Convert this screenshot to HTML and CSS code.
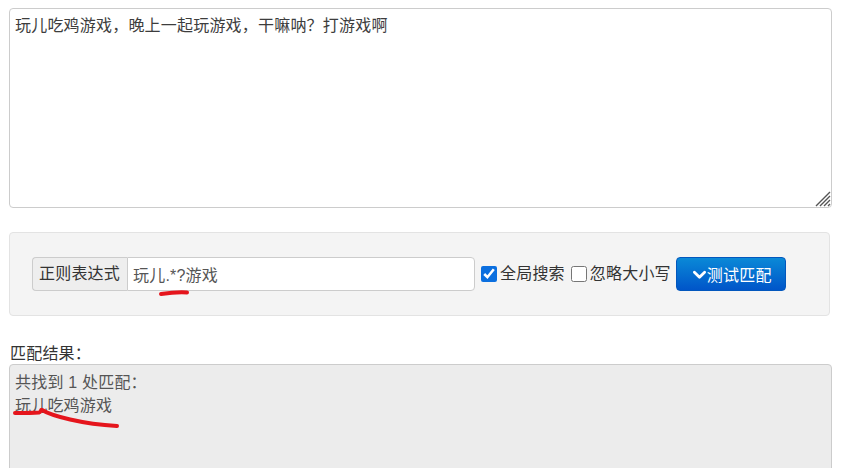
FILE: index.html
```html
<!DOCTYPE html>
<html lang="zh-CN">
<head>
    <meta charset="UTF-8">
    <title>正则表达式测试</title>
    <link rel="stylesheet" href="styles.css">
</head>
<body>

<main class="page">
    <div class="source-wrap">
        <textarea class="source-text" id="source">玩儿吃鸡游戏，晚上一起玩游戏，干嘛呐？打游戏啊</textarea>
        <svg class="grip" width="18" height="18" viewBox="0 0 18 18" aria-hidden="true">
            <path d="M17 3 L3 17 M17 7 L7 17 M17 11 L11 17 M17 15 L15 17" fill="none" stroke="#555" stroke-width="1.4"/>
        </svg>
    </div>

    <div class="regex-panel">
        <div class="input-group">
            <span class="addon">正则表达式</span>
            <input type="text" class="regex-input" id="regex" value="玩儿.*?游戏">
        </div>
        <label class="check"><input type="checkbox" id="global" checked>全局搜索</label>
        <label class="check"><input type="checkbox" id="ignoreCase">忽略大小写</label>
        <button type="button" class="btn-test" id="testBtn">
            <svg class="chevron" viewBox="0 0 14 14" width="13" height="13" aria-hidden="true">
                <path d="M1.5 4.5 L7 10 L12.5 4.5" fill="none" stroke="#fff" stroke-width="3" stroke-linecap="round" stroke-linejoin="round"/>
            </svg>测试匹配
        </button>
    </div>

    <div class="result-label">匹配结果：</div>
    <div class="result-box" id="result">
        <div>共找到 1 处匹配：</div>
        <div>玩儿吃鸡游戏</div>
    </div>
</main>

<!-- hand-drawn red marks over the screenshot -->
<svg class="mark mark-regex" width="40" height="12" viewBox="0 0 40 12" aria-hidden="true">
    <path d="M5 7 C 12 6, 22 5, 31 5.5" fill="none" stroke="#e5151c" stroke-width="4" stroke-linecap="round"/>
</svg>
<svg class="mark mark-result" width="120" height="28" viewBox="0 0 120 28" aria-hidden="true">
    <path d="M3 8 C 12 8, 20 8, 27 7.5 C 29 7, 29 4, 30 5 C 40 11, 70 19, 105 21" fill="none" stroke="#e5151c" stroke-width="4" stroke-linecap="round" stroke-linejoin="round"/>
</svg>

</body>
</html>
```

FILE: styles.css
```css
body {
    margin: 0;
    font-family: "Liberation Sans", "Noto Sans CJK SC", sans-serif;
    font-size: 16px;
    letter-spacing: 0.2px;
    color: #333;
    background-color: #fff;
    position: relative;
    height: 468px;
    overflow: hidden;
}

.page {
    padding: 8px 11px 0 9px;
}

.source-wrap {
    position: relative;
    width: 823px;
}

.source-text {
    display: block;
    box-sizing: border-box;
    width: 823px;
    height: 200px;
    margin: 0;
    padding: 6px 5px;
    border: 1px solid #ccc;
    border-radius: 4px;
    font-family: inherit;
    font-size: 16px;
    letter-spacing: 0.2px;
    line-height: 22px;
    color: #3d3d3d;
    resize: none;
}

.grip {
    position: absolute;
    right: 1px;
    bottom: 1px;
}

.regex-panel {
    display: flex;
    align-items: center;
    box-sizing: border-box;
    width: 821px;
    height: 84px;
    margin-top: 24px;
    padding: 0 22px;
    background-color: #f4f4f4;
    border: 1px solid #e3e3e3;
    border-radius: 4px;
}

.input-group {
    display: flex;
    height: 34px;
}

.addon {
    box-sizing: border-box;
    width: 95px;
    padding: 0 6px;
    white-space: nowrap;
    line-height: 32px;
    background-color: #eee;
    border: 1px solid #ccc;
    border-right: none;
    border-radius: 4px 0 0 4px;
    color: #333;
}

.regex-input {
    box-sizing: border-box;
    width: 348px;
    height: 34px;
    margin: 0;
    padding: 0 5px;
    border: 1px solid #ccc;
    border-radius: 0 4px 4px 0;
    font-family: inherit;
    font-size: 16px;
    letter-spacing: 0.2px;
    color: #555;
}

.check {
    display: flex;
    align-items: center;
    white-space: nowrap;
    color: #333;
    line-height: 22px;
}

.check input {
    width: 16px;
    height: 16px;
    margin: 0 3px 0 6px;
    accent-color: #0b6fdf;
}

.btn-test {
    display: flex;
    align-items: center;
    box-sizing: border-box;
    width: 110px;
    height: 34px;
    margin-left: 5px;
    padding: 0 0 0 16px;
    border: 1px solid #0257bd;
    border-radius: 4px;
    background: linear-gradient(#0a89d7, #0055c9);
    color: #fff;
    font-family: inherit;
    font-size: 16px;
    letter-spacing: 0.2px;
    white-space: nowrap;
    cursor: pointer;
}

.chevron {
    margin-right: 1px;
}

.result-label {
    margin-top: 27px;
    padding-left: 1px;
    line-height: 21px;
    color: #333;
}

.result-box {
    box-sizing: border-box;
    width: 823px;
    height: 120px;
    padding: 6px 5px;
    background-color: #ececec;
    border: 1px solid #ccc;
    border-radius: 4px;
    line-height: 23px;
    color: #555;
}

.mark {
    position: absolute;
    pointer-events: none;
}

.mark-regex {
    left: 156px;
    top: 287px;
}

.mark-result {
    left: 12px;
    top: 405px;
}
```
